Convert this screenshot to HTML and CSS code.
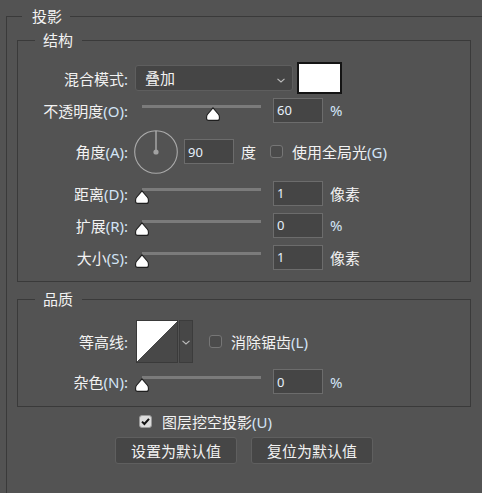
FILE: index.html
```html
<!DOCTYPE html>
<html lang="zh-CN">
<head>
    <meta charset="UTF-8">
    <meta name="viewport" content="width=device-width, initial-scale=1.0">
    <title>投影</title>
    <link rel="stylesheet" href="styles.css">
</head>
<body>
    <svg width="0" height="0" class="defs">
        <symbol id="thumb" viewBox="0 0 14 14">
            <path d="M7 0.8 L12.2 7 Q13.4 8.4 13.4 10 L13.4 11.4 Q13.4 13.4 11.4 13.4 L2.6 13.4 Q0.6 13.4 0.6 11.4 L0.6 10 Q0.6 8.4 1.8 7 Z" fill="#fff" stroke="#1e1e1e" stroke-width="1.1"/>
        </symbol>
        <symbol id="chevron" viewBox="0 0 8 5">
            <path d="M0.5 0.8 L4 4 L7.5 0.8" fill="none" stroke="#bdbdbd" stroke-width="1.1"/>
        </symbol>
    </svg>

    <fieldset class="group outer">
        <legend>投影</legend>

        <fieldset class="group box structure">
            <legend>结构</legend>
            <div class="row">
                <label class="label">混合模式<span class="key">:</span></label>
                <div class="select">叠加<svg class="chev"><use href="#chevron"/></svg></div>
                <div class="swatch"></div>
            </div>
            <div class="row">
                <label class="label">不透明度<span class="key">(O):</span></label>
                <div class="slider"><div class="track"></div><svg class="thumb" style="left: 70px;"><use href="#thumb"/></svg></div>
                <input type="text" class="num" value="60" readonly>
                <span class="unit key">%</span>
            </div>
            <div class="row row-dial">
                <label class="label">角度<span class="key">(A):</span></label>
                <svg class="dial" width="44" height="44" viewBox="0 0 44 44">
                    <circle cx="22" cy="22" r="21.3" fill="none" stroke="#ababab" stroke-width="1.1"/>
                    <line x1="22" y1="22" x2="22" y2="1" stroke="#c4c4c4" stroke-width="1.1"/>
                    <circle cx="22" cy="22" r="2.6" fill="#a2a2a2"/>
                </svg>
                <input type="text" class="num" value="90" readonly>
                <span class="unit">度</span>
                <span class="checkbox global"></span>
                <span class="check-text">使用全局光<span class="key">(G)</span></span>
            </div>
            <div class="row">
                <label class="label">距离<span class="key">(D):</span></label>
                <div class="slider"><div class="track"></div><svg class="thumb" style="left: -1px;"><use href="#thumb"/></svg></div>
                <input type="text" class="num" value="1" readonly>
                <span class="unit">像素</span>
            </div>
            <div class="row">
                <label class="label">扩展<span class="key">(R):</span></label>
                <div class="slider"><div class="track"></div><svg class="thumb" style="left: -1px;"><use href="#thumb"/></svg></div>
                <input type="text" class="num" value="0" readonly>
                <span class="unit key">%</span>
            </div>
            <div class="row">
                <label class="label">大小<span class="key">(S):</span></label>
                <div class="slider"><div class="track"></div><svg class="thumb" style="left: -1px;"><use href="#thumb"/></svg></div>
                <input type="text" class="num" value="1" readonly>
                <span class="unit">像素</span>
            </div>
        </fieldset>

        <fieldset class="group box quality">
            <legend>品质</legend>
            <div class="row row-contour">
                <label class="label">等高线<span class="key">:</span></label>
                <svg class="contour" width="42" height="43" viewBox="0 0 42 43" shape-rendering="crispEdges">
                    <rect x="0" y="0" width="42" height="43" fill="#484848"/>
                    <polygon points="1,1 41,1 1,42" fill="#ffffff"/>
                    <rect x="0.5" y="0.5" width="41" height="42" fill="none" stroke="#3a3a3a"/>
                </svg>
                <div class="contour-drop"><svg class="chev"><use href="#chevron"/></svg></div>
                <span class="checkbox aa"></span>
                <span class="check-text">消除锯齿<span class="key">(L)</span></span>
            </div>
            <div class="row row-noise">
                <label class="label">杂色<span class="key">(N):</span></label>
                <div class="slider"><div class="track"></div><svg class="thumb" style="left: -1px;"><use href="#thumb"/></svg></div>
                <input type="text" class="num" value="0" readonly>
                <span class="unit key">%</span>
            </div>
        </fieldset>

        <div class="check-row">
            <span class="checkbox checked">
                <svg width="11" height="11" viewBox="0 0 11 11"><path d="M2 5.6 L4.4 8 L9 2.8" fill="none" stroke="#111" stroke-width="2"/></svg>
            </span>
            <span class="check-text">图层挖空投影<span class="key">(U)</span></span>
        </div>

        <div class="buttons">
            <button type="button" class="button">设置为默认值</button>
            <button type="button" class="button">复位为默认值</button>
        </div>
    </fieldset>
</body>
</html>
```

FILE: styles.css
```css
body {
    margin: 0;
    height: 493px;
    overflow: hidden;
    background-color: #535353;
    color: #f2f2f2;
    font-family: "Noto Sans CJK SC", "Noto Sans", sans-serif;
    font-size: 15px;
}
.defs {
    position: absolute;
}
.key {
    color: #d2e4f6;
    font-family: "Noto Sans", "Noto Sans CJK SC", sans-serif;
}
.group {
    margin: 0;
    padding: 0;
    min-width: 0;
    box-sizing: border-box;
    border: 1px solid #3a3a3a;
}
.group legend {
    height: 16px;
    line-height: 16px;
    margin-left: 17px;
    padding: 0 9px 0 8px;
}
.outer {
    width: 520px;
    margin: 8px 0 0 6px;
    padding: 8px 10px 80px 10px;
}
.outer > legend {
    margin-left: 5px;
    padding: 0 8px 0 10px;
}
.box {
    width: 454px;
}
.structure {
    padding: 14px 0 8px;
}
.quality {
    margin-top: 9px;
    padding: 11px 0 8px;
}
.row {
    display: flex;
    align-items: center;
    height: 32px;
}
.row-dial {
    height: 51px;
}
.row-contour {
    height: 47px;
}
.row-noise {
    height: 33px;
}
.label {
    width: 110px;
    margin-right: 8px;
    text-align: right;
    white-space: nowrap;
}
.select {
    position: relative;
    width: 158px;
    height: 26px;
    margin-left: -1px;
    box-sizing: border-box;
    padding-left: 9px;
    line-height: 24px;
    background-color: #454545;
    border: 1px solid #5e5e5e;
    border-radius: 3px;
}
.chev {
    position: absolute;
    width: 8px;
    height: 5px;
}
.select .chev {
    right: 7px;
    top: 12px;
}
.swatch {
    width: 45px;
    height: 32px;
    margin-left: 4px;
    box-sizing: border-box;
    background-color: #fff;
    border: 2px solid #141414;
}
.slider {
    position: relative;
    width: 131px;
    height: 16px;
    margin-top: 5px;
}
.track {
    position: absolute;
    left: 6px;
    top: 0;
    width: 119px;
    height: 3px;
    background-color: #7b7b7b;
}
.thumb {
    position: absolute;
    top: 2px;
    width: 14px;
    height: 14px;
}
.num {
    width: 50px;
    height: 25px;
    margin: 0 0 0 6px;
    box-sizing: border-box;
    padding: 0 0 0 3px;
    background-color: #454545;
    border: 1px solid #6c6c6c;
    color: #e6f0fa;
    font-family: "Noto Sans", sans-serif;
    font-size: 13px;
    outline: none;
}
.unit {
    margin-left: 7px;
}
.dial {
    margin-left: -2px;
}
.checkbox {
    display: flex;
    align-items: center;
    justify-content: center;
    width: 13px;
    height: 13px;
    box-sizing: border-box;
    background-color: #4b4b4b;
    border: 1px solid #767676;
    border-radius: 3px;
}
.checkbox.global {
    margin-left: 14px;
}
.checkbox.aa {
    margin-left: 16px;
}
.checkbox.checked {
    background-color: #dcdcdc;
    border-color: #9a9a9a;
}
.check-text {
    margin-left: 9px;
    white-space: nowrap;
}
.contour {
    display: block;
}
.contour-drop {
    position: relative;
    width: 14px;
    height: 43px;
    margin-left: 1px;
    box-sizing: border-box;
    background-color: #474747;
    border: 1px solid #3c3c3c;
}
.contour-drop .chev {
    left: 2px;
    top: 19px;
}
.check-row {
    display: flex;
    align-items: center;
    height: 20px;
    margin: 4px 0 0 122px;
}
.check-row .check-text {
    margin-left: 10px;
}
.buttons {
    display: flex;
    gap: 14px;
    margin: 6px 0 0 98px;
}
.button {
    width: 122px;
    height: 27px;
    padding: 0;
    background-color: #464646;
    border: 1px solid #5f5f5f;
    border-radius: 3px;
    color: #f2f2f2;
    font-family: "Noto Sans CJK SC", sans-serif;
    font-size: 15px;
    cursor: pointer;
}
.button:hover {
    background-color: #4e4e4e;
}
```
